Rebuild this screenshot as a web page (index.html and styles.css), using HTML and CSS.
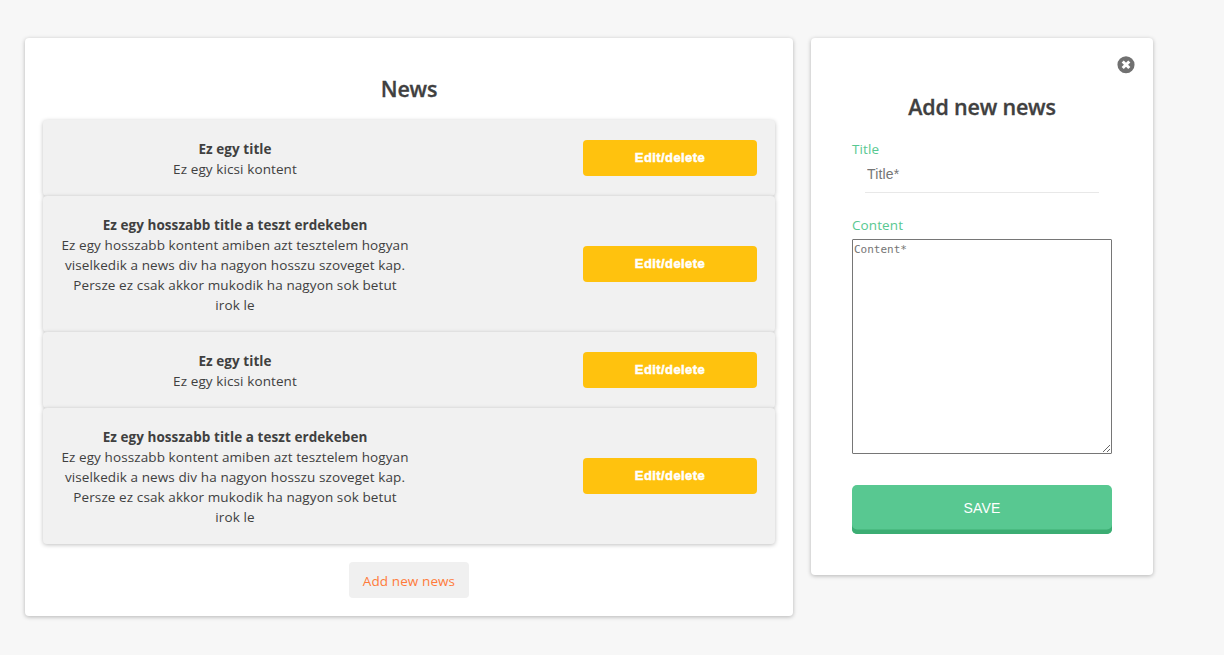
FILE: index.html
```html
<!DOCTYPE html>
<html lang="hu">
<head>
<meta charset="utf-8">
<title>News</title>
<link rel="stylesheet" href="styles.css">
</head>
<body>
<main class="layout">
  <section class="card news">
    <h2 class="heading">News</h2>
    <div class="list">
      <article class="item">
        <div class="text"><b class="title">Ez egy title</b><p class="body">Ez egy kicsi kontent</p></div>
        <button class="edit">Edit/delete</button>
      </article>
      <article class="item">
        <div class="text"><b class="title">Ez egy hosszabb title a teszt erdekeben</b><p class="body">Ez egy hosszabb kontent amiben azt tesztelem hogyan<br>viselkedik a news div ha nagyon hosszu szoveget kap.<br>Persze ez csak akkor mukodik ha nagyon sok betut<br>irok le</p></div>
        <button class="edit">Edit/delete</button>
      </article>
      <article class="item">
        <div class="text"><b class="title">Ez egy title</b><p class="body">Ez egy kicsi kontent</p></div>
        <button class="edit">Edit/delete</button>
      </article>
      <article class="item">
        <div class="text"><b class="title">Ez egy hosszabb title a teszt erdekeben</b><p class="body">Ez egy hosszabb kontent amiben azt tesztelem hogyan<br>viselkedik a news div ha nagyon hosszu szoveget kap.<br>Persze ez csak akkor mukodik ha nagyon sok betut<br>irok le</p></div>
        <button class="edit">Edit/delete</button>
      </article>
    </div>
    <button class="add">Add new news</button>
  </section>
  <section class="card editor">
    <svg class="close" viewBox="0 0 18 18" width="18" height="18"><circle cx="9" cy="9" r="8.8" fill="#717171"/><path d="M5.6 5.6l6.8 6.8M12.4 5.6l-6.8 6.8" stroke="#fff" stroke-width="3.1"/></svg>
    <form class="form">
      <h2 class="heading form-heading">Add new news</h2>
      <label class="label" for="title">Title</label>
      <input class="input" id="title" placeholder="Title*">
      <label class="label" for="content">Content</label>
      <textarea class="area" id="content" placeholder="Content*"></textarea>
      <button class="save" type="button">SAVE</button>
    </form>
  </section>
</main>
</body>
</html>
```

FILE: styles.css
```css
* { box-sizing: border-box; }
body {
  margin: 0;
  height: 655px;
  overflow: hidden;
  background: #f7f7f7;
  color: #404040;
  font-family: "Open Sans", "Noto Sans", sans-serif;
  font-size: 13.5px;
  line-height: 20px;
}
.layout {
  display: flex;
  align-items: flex-start;
  gap: 18px;
  padding: 38px 25px;
}
.card {
  background: #fff;
  border-radius: 4px;
  box-shadow: 0 1px 4px rgba(0, 0, 0, .27);
}
.news {
  width: 768px;
  height: 578px;
  padding: 36px 18px 18px;
  display: flex;
  flex-direction: column;
  align-items: center;
}
.heading {
  margin: 0;
  font-size: 21.5px;
  line-height: 30px;
  font-weight: 600;
  letter-spacing: -.2px;
  -webkit-text-stroke: .3px #404040;
  text-align: center;
}
.list { width: 732px; margin: 16px 0 18px; }
.item {
  display: flex;
  justify-content: space-between;
  align-items: center;
  padding: 18px;
  background: #f1f1f1;
  border-radius: 4px;
  box-shadow: 0 1px 4px rgba(0, 0, 0, .25);
}
.text {
  width: 348px;
  margin: 1px 0 -1px;
  text-align: center;
  white-space: nowrap;
}
.title { display: block; letter-spacing: .06px; }
.body { margin: 0; letter-spacing: .1px; }
.edit {
  width: 174px;
  height: 36px;
  padding: 0 0 2px;
  border: 0;
  border-radius: 4px;
  background: #ffc20e;
  color: #fff;
  font: 900 13px "Liberation Sans", Arial, sans-serif;
  letter-spacing: .42px;
  -webkit-text-stroke: .5px #fff;
}
.add {
  width: 120px;
  height: 36px;
  padding: 2px 0 0;
  border: 0;
  border-radius: 4px;
  background: #f0f0f0;
  color: #ff7b3a;
  font: inherit;
  letter-spacing: .1px;
}
.editor {
  width: 342px;
  height: 537px;
  padding: 18px 18px 41px;
  display: flex;
  flex-direction: column;
}
.close { align-self: flex-end; }
.form {
  display: flex;
  flex-direction: column;
  padding: 18px 23px 0;
}
.form-heading { margin-bottom: 17px; }
.label { color: #58c891; letter-spacing: .1px; }
.input {
  margin: 0 13px 22px;
  height: 34px;
  padding: 0 2px 3px;
  border: 0;
  border-bottom: 1px solid #e8e8e8;
  font: 14px "Liberation Sans", Arial, sans-serif;
  letter-spacing: .15px;
}
.input::placeholder, .area::placeholder { color: #757575; }
.area {
  height: 215px;
  margin: 4px 0 31px;
  padding: 2px 1px;
  border: 1px solid #767676;
  border-radius: 1px;
  font: 11px/15px "DejaVu Sans Mono", monospace;
}
.save {
  height: 49.5px;
  padding: 0 0 3px;
  border: 0;
  border-radius: 5px;
  background: #58c891;
  box-shadow: inset 0 -4.5px #3cad73;
  color: #fff;
  font: 14px "Liberation Sans", Arial, sans-serif;
  letter-spacing: .2px;
}
```
